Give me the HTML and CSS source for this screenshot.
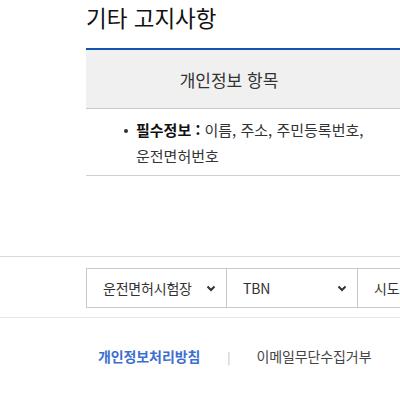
FILE: index.html
```html
<!DOCTYPE html>
<html lang="ko">
<head>
<meta charset="utf-8">
<link rel="stylesheet" href="styles.css">
</head>
<body>
<div class="page">
  <div class="wrap">
    <h2 class="title">기타 고지사항</h2>
    <div class="table">
      <div class="thead">
        <div class="th col1">개인정보 항목</div>
        <div class="th col2"></div>
      </div>
      <div class="trow">
        <div class="td col1">
          <ul class="list">
            <li><span class="dot"></span><span class="txt"><b>필수정보 :</b> 이름, 주소, 주민등록번호, 운전면허번호</span></li>
          </ul>
        </div>
        <div class="td col2"></div>
      </div>
    </div>
  </div>

  <div class="selbar">
    <div class="wrap sels">
      <div class="sel s1"><span>운전면허시험장</span><svg class="chev" width="10" height="7" viewBox="0 0 10 7"><polyline points="1.5,1.5 5,5 8.5,1.5" fill="none" stroke="#333" stroke-width="2"/></svg></div>
      <div class="sel s2"><span>TBN</span><svg class="chev" width="10" height="7" viewBox="0 0 10 7"><polyline points="1.5,1.5 5,5 8.5,1.5" fill="none" stroke="#333" stroke-width="2"/></svg></div>
      <div class="sel s3"><span>시도교통정보</span><svg class="chev" width="10" height="7" viewBox="0 0 10 7"><polyline points="1.5,1.5 5,5 8.5,1.5" fill="none" stroke="#333" stroke-width="2"/></svg></div>
    </div>
  </div>

  <div class="foot">
    <a class="flink strong">개인정보처리방침</a>
    <span class="sep">|</span>
    <a class="flink">이메일무단수집거부</a>
  </div>
</div>
</body>
</html>
```

FILE: styles.css
```css
html, body {
  margin: 0;
  padding: 0;
  background: #fff;
  overflow: hidden;
}
body {
  font-family: "Noto Sans CJK KR", "Noto Sans", sans-serif;
  color: #333;
  word-break: keep-all;
}
.page {
  width: 400px;
  height: 400px;
  overflow: hidden;
}
.wrap {
  padding-left: 86px;
  width: 1000px;
}
.title {
  margin: 0 0 13px;
  height: 35px;
  line-height: 35px;
  font-size: 22.5px;
  font-weight: 400;
  color: #111;
}
.table {
  border-top: 2px solid #1553b0;
}
.thead {
  display: flex;
  background: #f0f0f0;
  border-bottom: 1px solid #c8c8c8;
  height: 58px;
}
.th {
  display: flex;
  align-items: center;
  justify-content: center;
  font-size: 17px;
  color: #333;
}
.col1 { width: 286px; flex: none; }
.col2 { flex: 1; }
.trow {
  display: flex;
  border-bottom: 1px solid #d0d0d0;
}
.td {
  padding: 8px 0 6px 0;
  box-sizing: border-box;
}
.list {
  margin: 0;
  padding: 0 0 0 38px;
  list-style: none;
}
.list li {
  display: flex;
  font-size: 15px;
  line-height: 26px;
  color: #333;
}
.list b { color: #111; font-weight: 700; }
.dot {
  flex: none;
  width: 4px;
  height: 4px;
  border-radius: 50%;
  background: #333;
  margin: 12px 8px 0 0;
}
.selbar {
  margin-top: 80px;
  border-top: 1px solid #d9d9d9;
  border-bottom: 1px solid #e6e6e6;
  padding: 11px 0 9px;
}
.sels {
  display: flex;
}
.sel {
  display: flex;
  align-items: center;
  justify-content: space-between;
  box-sizing: border-box;
  height: 40px;
  border: 1px solid #c8c8c8;
  padding: 0 10px 0 16px;
  font-size: 14px;
  letter-spacing: -0.2px;
  color: #333;
  margin-right: -1px;
  white-space: nowrap;
}
.s1 { width: 141px; }
.s2 { width: 132px; }
.s3 { width: 140px; }
.chev { flex: none; }
.foot {
  display: flex;
  align-items: center;
  padding: 27px 0 0 98px;
  height: 22px;
  font-size: 14px;
  letter-spacing: -0.1px;
}
.flink { color: #444; }
.flink.strong { color: #3d6fd0; font-weight: 700; }
.sep {
  color: #bbb;
  font-size: 12px;
  margin: 0 26px 0 27px;
}
```
